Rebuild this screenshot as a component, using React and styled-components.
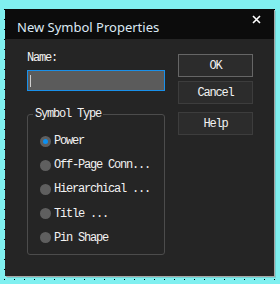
import styled, { createGlobalStyle } from "styled-components";

const GlobalStyle = createGlobalStyle`
  html, body {
    margin: 0;
    padding: 0;
    width: 280px;
    height: 284px;
    overflow: hidden;
    background-color: #80f0f0;
    background-image:
      linear-gradient(to bottom, transparent 0 1px, #80f0f0 1px 10px),
      linear-gradient(to right, #000 0 1px, #80f0f0 1px 10px);
    background-size: 10px 10px;
    background-position: 4px 9px;
  }
`;

const Dialog = styled.div`
  margin: 9px 0 0 5px;
  width: 269px;
  height: 267px;
  background: #252525;
  box-shadow: 1px 1px 0 #a6a6a6, 2px 2px 0 rgba(0, 0, 0, 0.12);
  display: flex;
  flex-direction: column;
  font-family: "Liberation Mono", monospace;
  font-size: 12px;
  letter-spacing: -1.2px;
  color: #f2f2f2;
`;

const TitleBar = styled.div`
  height: 30px;
  background: #0c0c0c;
  display: flex;
  align-items: center;
  justify-content: space-between;
  padding: 0 12px 0 12px;
  box-sizing: border-box;
`;

const Title = styled.span`
  font-family: "Noto Sans", sans-serif;
  font-size: 13px;
  letter-spacing: 0;
  color: #dde9f4;
  margin-top: 5px;
`;

const Close = styled.svg`
  width: 9px;
  height: 9px;
  margin-top: -10px;
  margin-right: 1px;
`;

const Body = styled.div`
  display: flex;
  gap: 13px;
  padding: 12px 0 0 22px;
`;

const LeftCol = styled.div`
  width: 138px;
  display: flex;
  flex-direction: column;
`;

const Label = styled.div`
  line-height: 14px;
  height: 14px;
  margin-bottom: 5px;
`;

const TextBox = styled.div`
  height: 21px;
  box-sizing: border-box;
  border: 1px solid #1990ea;
  background: #5b5b5b;
  display: flex;
  align-items: center;
  padding-left: 2px;
`;

const Caret = styled.span`
  width: 1px;
  height: 12px;
  background: #cfcfcf;
`;

const Group = styled.fieldset`
  margin: 16px 0 0 0;
  padding: 8px 0 4px 12px;
  width: 138px;
  box-sizing: border-box;
  border: 1px solid #4c4c4c;
  border-radius: 3px;
  display: flex;
  flex-direction: column;
`;

const Legend = styled.legend`
  margin-left: -7px;
  padding: 0 2px;
  line-height: 14px;
`;

const Option = styled.div`
  height: 24.2px;
  display: flex;
  align-items: center;
  gap: 3px;
  white-space: nowrap;
`;

const Radio = styled.span`
  width: 11px;
  height: 11px;
  border-radius: 50%;
  background: #5f5f5f;
  display: flex;
  align-items: center;
  justify-content: center;

  &::after {
    content: "";
    width: 5px;
    height: 5px;
    border-radius: 50%;
    background: ${({ $checked }) => ($checked ? "#0b90f2" : "transparent")};
  }
`;

const RightCol = styled.div`
  width: 75px;
  display: flex;
  flex-direction: column;
  padding-top: 3px;
`;

const Button = styled.div`
  height: 23px;
  box-sizing: border-box;
  border: 1px solid ${({ $default }) => ($default ? "#666" : "#3d3d3d")};
  background: #2c2c2c;
  display: flex;
  align-items: center;
  justify-content: center;
  margin-bottom: ${({ $gap }) => $gap}px;
`;

const options = ["Power", "Off-Page Conn...", "Hierarchical ...", "Title ...", "Pin Shape"];

export default function App() {
  return (
    <>
      <GlobalStyle />
      <Dialog>
        <TitleBar>
          <Title>New Symbol Properties</Title>
          <Close viewBox="0 0 9 9">
            <path d="M1 1 L8 8 M8 1 L1 8" stroke="#fff" strokeWidth="1.6" />
          </Close>
        </TitleBar>
        <Body>
          <LeftCol>
            <Label>Name:</Label>
            <TextBox>
              <Caret />
            </TextBox>
            <Group>
              <Legend>Symbol Type</Legend>
              {options.map((o, i) => (
                <Option key={o}>
                  <Radio $checked={i === 0} />
                  {o}
                </Option>
              ))}
            </Group>
          </LeftCol>
          <RightCol>
            <Button $default $gap={4}>OK</Button>
            <Button $gap={8}>Cancel</Button>
            <Button $gap={0}>Help</Button>
          </RightCol>
        </Body>
      </Dialog>
    </>
  );
}
